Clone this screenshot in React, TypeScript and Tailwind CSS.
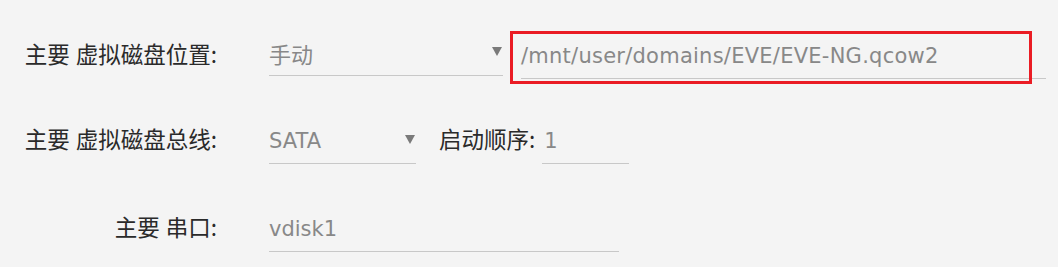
import React from "react";

const latin = "font-['DejaVu_Sans','Noto_Sans_CJK_SC',sans-serif]";
const cjk = "font-['Noto_Sans_CJK_SC',sans-serif]";

function Arrow() {
  return (
    <svg width="10" height="9" viewBox="0 0 10 9" className="self-start mt-[6px] shrink-0">
      <path d="M0 0 H10 L5 9 Z" fill="#7a7a7a" />
    </svg>
  );
}

function Label({ children, className = "" }: { children: React.ReactNode; className?: string }) {
  return (
    <div
      className={`${cjk} text-[22.5px] leading-[24px] text-[#2a2a2a] whitespace-nowrap [word-spacing:1px] ${className}`}
    >
      {children}
    </div>
  );
}

export default function App() {
  return (
    <div className="w-[1058px] h-[267px] bg-[#f4f4f4] overflow-hidden flex flex-col pt-[41px]">
      {/* Row 1 */}
      <div className="flex items-baseline">
        <Label className="w-[217px] text-right">主要 虚拟磁盘位置:</Label>
        <div className="ml-[52px] w-[234px] flex items-baseline justify-between pb-[10px] border-b border-[#c8c8c8] pr-[1px]">
          <span className={`${cjk} text-[22px] leading-[24px] text-[#888888]`}>手动</span>
          <Arrow />
        </div>
        <div className="relative ml-[18px] w-[525px] pb-[10px] border-b border-[#c8c8c8]">
          <span className={`${latin} text-[21px] leading-[24px] tracking-[0.25px] text-[#888888] block`}>
            /mnt/user/domains/EVE/EVE-NG.qcow2
          </span>
          <div className="absolute left-[-11px] top-[-13px] right-[14px] bottom-[-6px] border-[3px] border-[#ea1c24] pointer-events-none" />
        </div>
      </div>

      {/* Row 2 */}
      <div className="flex items-baseline mt-[47px]">
        <Label className="w-[217px] text-right">主要 虚拟磁盘总线:</Label>
        <div className="ml-[52px] w-[147px] flex items-baseline justify-between pb-[10px] border-b border-[#c8c8c8] pr-[1px]">
          <span className={`${latin} text-[21px] leading-[24px] text-[#888888]`}>SATA</span>
          <Arrow />
        </div>
        <Label className="ml-[23px]">启动顺序:</Label>
        <div className="ml-[7px] w-[87px] pl-[2px] pb-[10px] border-b border-[#c8c8c8]">
          <span className={`${latin} text-[21px] leading-[24px] text-[#888888] block`}>1</span>
        </div>
      </div>

      {/* Row 3 */}
      <div className="flex items-baseline mt-[50px]">
        <Label className="w-[217px] text-right">主要 串口:</Label>
        <div className="ml-[52px] w-[350px] pb-[10px] border-b border-[#c8c8c8]">
          <span className={`${latin} text-[21px] leading-[24px] text-[#888888] block`}>vdisk1</span>
        </div>
      </div>
    </div>
  );
}
